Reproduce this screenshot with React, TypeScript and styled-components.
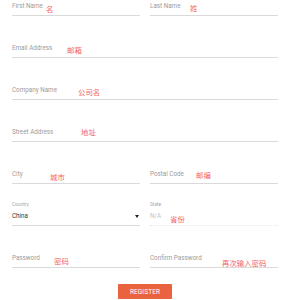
import React from "react";
import styled, { createGlobalStyle } from "styled-components";

const Global = createGlobalStyle`
  html, body { margin: 0; padding: 0; background: #ffffff; }
  body { font-family: Roboto, "Noto Sans", Arial, sans-serif; }
  * { box-sizing: border-box; }
`;

const Form = styled.form`
  width: 288px;
  padding: 0 10px 0 12px;
  display: flex;
  flex-direction: column;
  align-items: center;
`;

const Grid = styled.div`
  width: 100%;
  display: grid;
  grid-template-columns: 128px 128px;
  column-gap: 10px;
  row-gap: 26px;
`;

const Field = styled.div<{ $full?: boolean; $disabled?: boolean }>`
  position: relative;
  grid-column: ${(p) => (p.$full ? "1 / span 2" : "auto")};
  height: 16px;
  padding-bottom: 2px;
  border-bottom: 1px ${(p) => (p.$disabled ? "dotted #e6e6e6" : "solid #dadada")};
  display: flex;
  align-items: flex-start;
  justify-content: space-between;
`;

const Label = styled.span`
  font-size: 6.3px;
  line-height: 13px;
  color: #9c9c9c;
  white-space: nowrap;
`;

const Value = styled.span<{ $muted?: boolean }>`
  font-size: 6.3px;
  line-height: 13px;
  color: ${(p) => (p.$muted ? "#c4c4c4" : "#333333")};
`;

const FloatLabel = styled.span`
  position: absolute;
  left: 0;
  top: -8px;
  font-size: 4.8px;
  line-height: 6px;
  color: #a8a8a8;
`;

const Annot = styled.span<{ $x: number; $dy: number }>`
  position: absolute;
  left: ${(p) => p.$x}px;
  top: ${(p) => 1 + p.$dy}px;
  font-family: "Noto Sans CJK SC", sans-serif;
  font-size: 7.4px;
  font-weight: 400;
  line-height: 11px;
  color: #f46262;
  white-space: nowrap;
`;

const Arrow = styled.svg`
  margin-top: 5px;
  margin-right: 1px;
`;

const Button = styled.button`
  margin-top: 16px;
  width: 54px;
  height: 15px;
  border: none;
  border-radius: 1px;
  background: #e9633e;
  color: #ffffff;
  font-family: Roboto, Arial, sans-serif;
  font-size: 6.5px;
  letter-spacing: 0.1px;
  text-transform: uppercase;
  padding: 0;
  box-shadow: 0 1px 1px rgba(0, 0, 0, 0.15);
`;

export default function App() {
  return (
    <>
      <Global />
      <Form>
        <Grid>
          <Field>
            <Label>First Name</Label>
            <Annot $x={34} $dy={2}>名</Annot>
          </Field>
          <Field>
            <Label>Last Name</Label>
            <Annot $x={40} $dy={1}>姓</Annot>
          </Field>
          <Field $full>
            <Label>Email Address</Label>
            <Annot $x={55} $dy={1}>邮箱</Annot>
          </Field>
          <Field $full>
            <Label>Company Name</Label>
            <Annot $x={66} $dy={1}>公司名</Annot>
          </Field>
          <Field $full>
            <Label>Street Address</Label>
            <Annot $x={69} $dy={-1}>地址</Annot>
          </Field>
          <Field>
            <Label>City</Label>
            <Annot $x={38} $dy={2}>城市</Annot>
          </Field>
          <Field>
            <Label>Postal Code</Label>
            <Annot $x={46} $dy={0}>邮编</Annot>
          </Field>
          <Field>
            <FloatLabel>Country</FloatLabel>
            <Value>China</Value>
            <Arrow width="4" height="3" viewBox="0 0 4 3">
              <polygon points="0,0 4,0 2,3" fill="#222" />
            </Arrow>
          </Field>
          <Field $disabled>
            <FloatLabel>State</FloatLabel>
            <Value $muted>N/A</Value>
            <Annot $x={20} $dy={2}>省份</Annot>
          </Field>
          <Field>
            <Label>Password</Label>
            <Annot $x={42} $dy={2}>密码</Annot>
          </Field>
          <Field>
            <Label>Confirm Password</Label>
            <Annot $x={72} $dy={3.5}>再次输入密码</Annot>
          </Field>
        </Grid>
        <Button type="button">Register</Button>
      </Form>
    </>
  );
}
